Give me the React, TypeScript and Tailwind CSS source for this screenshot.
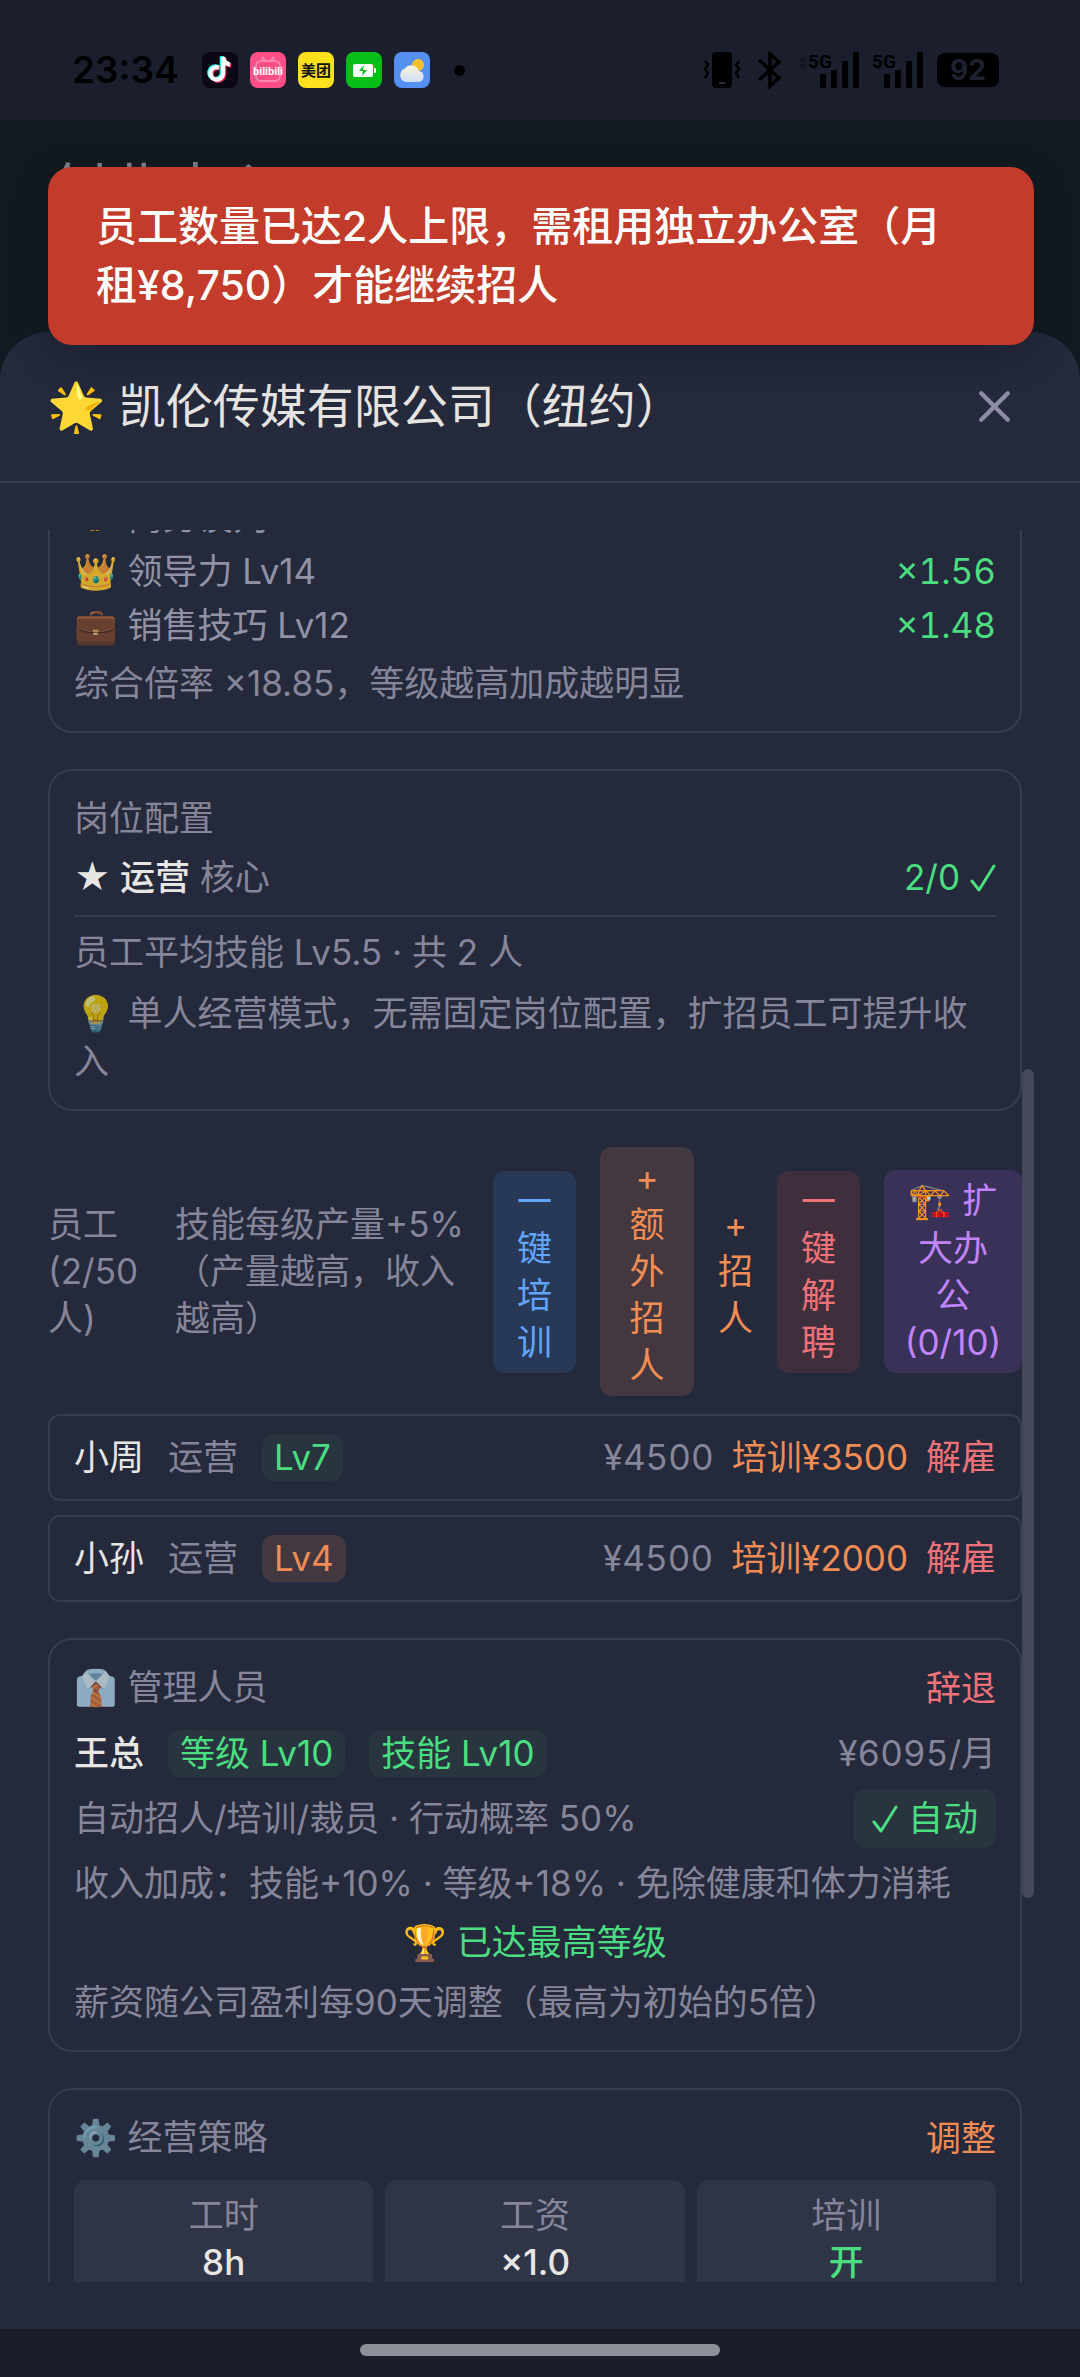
import type { ReactNode } from "react";

function Check() {
  return (
    <svg viewBox="0 0 26 28" className="inline-block h-7 w-[26px]" fill="none" stroke="currentColor" strokeWidth="3" strokeLinecap="round" strokeLinejoin="round" aria-label="✓">
      <path d="M2 17l7 9L24 2" />
    </svg>
  );
}

function Emoji({ children, className = "" }: { children: ReactNode; className?: string }) {
  return <span className={`font-['Noto_Color_Emoji'] ${className}`}>{children}</span>;
}

function Card({ children, className = "rounded-3xl pt-6" }: { children: ReactNode; className?: string }) {
  return <section className={`border-2 border-[#373c4f] px-6 pb-6 ${className}`}>{children}</section>;
}

function Pill({ children, tone }: { children: ReactNode; tone: "green" | "orange" }) {
  return (
    <span className={`rounded-xl px-3 ${tone === "green" ? "bg-[#28353f] text-[#4ade80]" : "bg-[#43383f] text-[#f08c54]"}`}>
      {children}
    </span>
  );
}

function Signal({ arrows = false }: { arrows?: boolean }) {
  return (
    <svg viewBox="0 0 64 40" className="h-10 w-16" fill="#000">
      {arrows && <path d="M4 6l4 6H0zM4 20l4-6H0z" fill="#12151f" />}
      <text x="9" y="18" fontSize="19" fontWeight="700" fontFamily="Roboto, sans-serif">5G</text>
      <rect x="21" y="24" width="6" height="14" rx="1" />
      <rect x="32" y="20" width="6" height="18" rx="1" />
      <rect x="43" y="11" width="6" height="27" rx="1" />
      <rect x="54" y="2" width="6" height="36" rx="1" />
    </svg>
  );
}

function StatusBar() {
  return (
    <div className="flex h-[120px] shrink-0 items-center justify-between bg-[#1b1f2d] pt-5 pr-[81px] pl-[72px]">
      <div className="flex items-center">
        <span className="mr-6 w-[106px] text-[37px] leading-10 font-semibold text-black">23:34</span>
        <div className="flex items-center gap-3">
          <svg viewBox="0 0 36 36" className="size-9">
            <rect width="36" height="36" rx="8" fill="#0b0714" />
            <g fill="none" strokeWidth="4.2">
              <path d="M17 15.500a6.300 6.300 0 1 0 4 6V5c.5 4.500 3 7 7 7.500" stroke="#2af0ea" transform="translate(-1.200 -.8)" />
              <path d="M17 15.500a6.300 6.300 0 1 0 4 6V5c.5 4.500 3 7 7 7.500" stroke="#fb3560" transform="translate(1.200 1)" />
              <path d="M17 15.500a6.300 6.300 0 1 0 4 6V5c.5 4.500 3 7 7 7.500" stroke="#fff" />
            </g>
          </svg>
          <svg viewBox="0 0 36 36" className="size-9">
            <rect width="36" height="36" rx="8" fill="#ff4f86" />
            <path d="M12 5l3 4M24 5l-3 4" stroke="#ff86ac" strokeWidth="2.500" />
            <rect x="6" y="9" width="24" height="20" rx="5" fill="none" stroke="#ff86ac" strokeWidth="2" />
            <text x="18" y="23" textAnchor="middle" fontSize="11" fontWeight="700" fill="#fff" fontFamily="Roboto, sans-serif">bilibili</text>
          </svg>
          <svg viewBox="0 0 36 36" className="size-9">
            <rect width="36" height="36" rx="8" fill="#ffe01d" />
            <text x="18" y="24" textAnchor="middle" fontSize="15" fontWeight="700" fill="#111" fontFamily="Noto Sans CJK SC, sans-serif">美团</text>
          </svg>
          <svg viewBox="0 0 36 36" className="size-9">
            <rect width="36" height="36" rx="8" fill="#06be16" />
            <rect x="7" y="12" width="20" height="13" rx="2" fill="#fff" />
            <rect x="28" y="16" width="2" height="5" rx="1" fill="#fff" />
            <path d="M18 13l-5 6h4l-1 5 5-6h-4z" fill="#06be16" />
          </svg>
          <svg viewBox="0 0 36 36" className="size-9">
            <defs>
              <linearGradient id="cloud" x1="0" y1="0" x2="0" y2="1">
                <stop offset="0" stopColor="#fbf3d8" />
                <stop offset="1" stopColor="#cfe0fb" />
              </linearGradient>
            </defs>
            <rect width="36" height="36" rx="8" fill="#5490f0" />
            <circle cx="24" cy="13" r="6" fill="#fdc02c" />
            <path d="M12 30a7 7 0 0 1-1-13.500 8 8 0 0 1 14 2.500 5.600 5.600 0 0 1 0 11z" fill="url(#cloud)" />
          </svg>
        </div>
        <span className="ml-6 size-[11px] rounded-full bg-black" />
      </div>
      <div className="flex items-center">
        <svg viewBox="0 0 38 38" className="size-[38px]" fill="none" stroke="#000" strokeWidth="2.500">
          <rect x="9" y="1" width="20" height="36" rx="4" fill="#000" stroke="none" />
          <path d="M16 32h6" stroke="#3a3f50" strokeWidth="1.500" />
          <path d="M2 10l3 4-3 4 3 4-3 5M36 10l-3 4 3 4-3 4 3 5" />
        </svg>
        <svg viewBox="0 0 26 38" className="mr-4 ml-4 h-[38px] w-[26px]" fill="none" stroke="#000" strokeWidth="3.500">
          <path d="M2 9l20 18-9 8V3l9 8L2 29" />
        </svg>
        <Signal arrows />
        <Signal />
        <div className="ml-2.5 flex h-[34px] w-[62px] items-center justify-center rounded-lg bg-black text-[28px] font-bold text-[#1e2230]">92</div>
      </div>
    </div>
  );
}

function Skill({ icon, name, value, className = "mb-1.5" }: { icon: string; name: string; value?: string; className?: string }) {
  return (
    <div className={`flex justify-between ${className}`}>
      <span className="text-[#9291a5]">
        <Emoji className="opacity-80">{icon}</Emoji> {name}
      </span>
      {value && <span className="text-[#4ade80] tabular-nums">{value}</span>}
    </div>
  );
}

function Employee({ name, level, tone, cost }: { name: string; level: string; tone: "green" | "orange"; cost: string }) {
  return (
    <li className="flex items-center justify-between rounded-xl border-2 border-[#373c4f] px-6 py-[18px]">
      <div className="flex gap-6">
        <span className="text-[#e8e6e3]">{name}</span>
        <span>运营</span>
        <Pill tone={tone}>{level}</Pill>
      </div>
      <div className="flex gap-[18px]">
        <span className="tabular-nums">¥4500</span>
        <button className="text-[#f08c54]">培训¥{cost}</button>
        <button className="text-[#f07178]">解雇</button>
      </div>
    </li>
  );
}

function Setting({ label, value, tone = "text-[#e8e6e3]" }: { label: string; value: string; tone?: string }) {
  return (
    <div className="rounded-xl bg-[#303447] py-3 text-center">
      <div>{label}</div>
      <div className={`font-medium ${tone}`}>{value}</div>
    </div>
  );
}

export default function App() {
  return (
    <div className="relative flex h-screen flex-col overflow-hidden bg-[#121a21] font-[Inter,'Noto_Sans_CJK_SC','Noto_Color_Emoji',sans-serif] text-[35px] leading-[47px] text-[#86859a]">
      <StatusBar />
      <header className="h-[212px] shrink-0 px-12 pt-[34px]">
        <h1 className="text-[59px] leading-[74px] text-[#7c8082]">创业中心</h1>
      </header>

      <div role="alert" className="absolute top-[167px] right-[46px] left-12 z-10 rounded-3xl bg-[#c33b2a] py-[30px] pr-16 pl-12 text-[41px] leading-[59px] font-medium text-white shadow-[0_12px_40px_rgba(0,0,0,0.2)]">
        员工数量已达2人上限，需租用独立办公室（月租¥8,750）才能继续招人
      </div>

      <main className="flex min-h-0 flex-1 flex-col rounded-t-[48px] bg-[#24293b]">
        <div className="flex items-center justify-between border-b-2 border-[#373c4f] px-[47px] py-9">
          <h2 className="text-[47px] leading-[64px] text-[#e6e4e0]">
            <Emoji>🌟</Emoji> 凯伦传媒有限公司（纽约）
          </h2>
          <button aria-label="关闭" className="p-3 text-[#8e8ba2]">
            <svg viewBox="0 0 24 24" className="size-[53px]" fill="none" stroke="currentColor" strokeWidth="2" strokeLinecap="round">
              <path d="M6 6l12 12M18 6L6 18" />
            </svg>
          </button>
        </div>

        <div className="relative my-[47px] mr-[46px] ml-12 flex min-h-0 flex-1 flex-col gap-9 overflow-hidden pr-3 *:shrink-0">
          <span className="absolute top-[539px] right-0 h-[829px] w-3 rounded-full bg-[#444859]" />

          <Card className="rounded-b-3xl border-t-0">
            <Skill icon="🤝" name="商务谈判" className="-mt-9 mb-1.5" />
            <Skill icon="👑" name="领导力 Lv14" value="×1.56" />
            <Skill icon="💼" name="销售技巧 Lv12" value="×1.48" className="mb-2.5" />
            <p>综合倍率 ×18.85，等级越高加成越明显</p>
          </Card>

          <Card>
            <h3>岗位配置</h3>
            <div className="mt-3 flex justify-between border-b-2 border-[#373c4f] pb-3.5">
              <span>
                <span className="font-medium text-[#e8e6e3]">★ 运营</span> 核心
              </span>
              <span className="flex items-center gap-2.5 text-[#4ade80]">
                2/0 <Check />
              </span>
            </div>
            <p className="mt-3">员工平均技能 Lv5.5 · 共 2 人</p>
            <p className="mt-3.5">
              <Emoji className="opacity-70">💡</Emoji> 单人经营模式，无需固定岗位配置，扩招员工可提升收入
            </p>
          </Card>

          <section>
            <div className="mb-[18px] flex items-center gap-6">
              <h3 className="w-[103px] shrink-0">员工(2/50人)</h3>
              <p className="flex-1">技能每级产量+5%（产量越高，收入越高）</p>
              <button className="w-[83px] shrink-0 rounded-xl bg-[#283857] px-6 py-[7px] text-[#60a5fa]">一键培训</button>
              <button className="w-[94px] shrink-0 rounded-xl bg-[#43383f] px-7 py-[7px] text-[#f08c54]">+<br />额外招人</button>
              <button className="w-[35px] shrink-0 text-[#f08c54]">+<br />招人</button>
              <button className="w-[83px] shrink-0 rounded-xl bg-[#3f2f3c] px-6 py-[7px] text-[#f07178]">一键解聘</button>
              <button className="w-[138px] shrink-0 rounded-xl bg-[#393158] px-4 py-[7px] text-[#c084fc]">
                <Emoji>🏗️</Emoji> 扩<br />大办<br />公<br />(0/10)
              </button>
            </div>
            <ul className="flex flex-col gap-3.5">
              <Employee name="小周" level="Lv7" tone="green" cost="3500" />
              <Employee name="小孙" level="Lv4" tone="orange" cost="2000" />
            </ul>
          </section>

          <Card>
            <div className="flex justify-between">
              <h3>
                <Emoji className="opacity-70">👔</Emoji> 管理人员
              </h3>
              <button className="text-[#f07178]">辞退</button>
            </div>
            <div className="mt-[18px] flex justify-between">
              <div className="flex gap-6">
                <span className="font-medium text-[#e8e6e3]">王总</span>
                <Pill tone="green">等级 Lv10</Pill>
                <Pill tone="green">技能 Lv10</Pill>
              </div>
              <span className="tabular-nums">¥6095/月</span>
            </div>
            <div className="mt-3 flex items-center justify-between">
              <span>自动招人/培训/裁员 · 行动概率 50%</span>
              <button className="flex items-center gap-2.5 rounded-xl bg-[#28353f] px-[18px] py-1.5 text-[#4ade80]">
                <Check /> 自动
              </button>
            </div>
            <p className="mt-3">收入加成：技能+10% · 等级+18% · 免除健康和体力消耗</p>
            <p className="mt-3 text-center text-[#4ade80]">
              <Emoji>🏆</Emoji> 已达最高等级
            </p>
            <p className="mt-3">薪资随公司盈利每90天调整（最高为初始的5倍）</p>
          </Card>

          <Card>
            <div className="flex justify-between">
              <h3>
                <Emoji className="opacity-70">⚙️</Emoji> 经营策略
              </h3>
              <button className="text-[#f08c54]">调整</button>
            </div>
            <div className="mt-[18px] grid grid-cols-3 gap-3">
              <Setting label="工时" value="8h" />
              <Setting label="工资" value="×1.0" />
              <Setting label="培训" value="开" tone="text-[#4ade80]" />
            </div>
          </Card>
        </div>
      </main>

      <footer className="flex h-12 shrink-0 items-center justify-center bg-[#1a1e2b]">
        <span className="mb-1.5 h-3 w-1/3 rounded-full bg-[#8e9099]" />
      </footer>
    </div>
  );
}
